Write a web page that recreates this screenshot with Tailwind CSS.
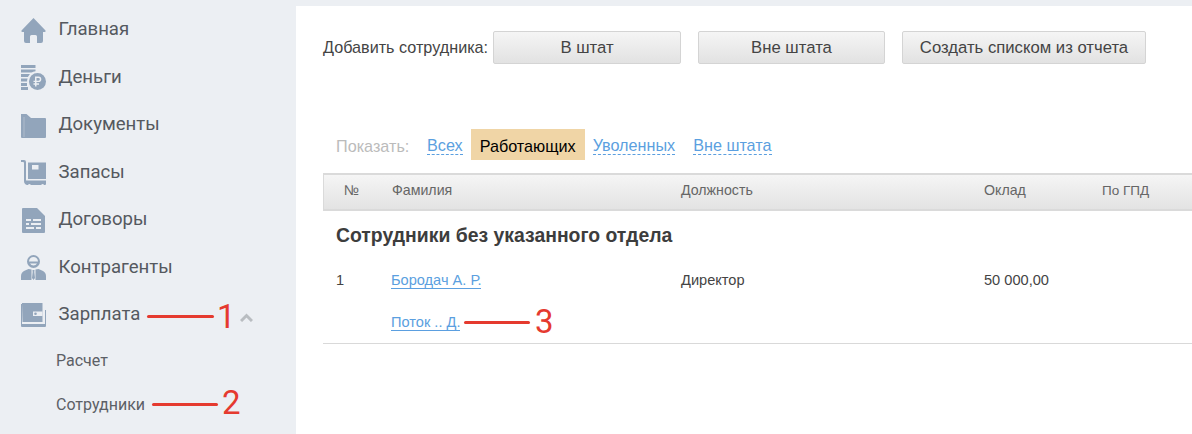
<!DOCTYPE html>
<html lang="ru">
<head>
    <meta charset="UTF-8">
    <title>Сотрудники</title>
    <script src="https://cdn.jsdelivr.net/npm/@tailwindcss/browser@4"></script>
</head>
<body class="relative flex h-[434px] w-[1192px] overflow-hidden bg-[#eceff3] font-['Liberation_Sans',sans-serif]">
    <!-- Sidebar -->
    <aside class="w-[296px] shrink-0 pl-[21px] pt-[6.5px] font-['Roboto',sans-serif] text-[18.6px] text-[#55595f]">
        <div class="flex h-[47.5px] items-center gap-[12.5px]">
            <svg class="h-[25px] w-[25px]" viewBox="0 0 25 25" fill="#92a5bb"><path d="M12.500 0 L24.500 12.500 Q25 14 23.500 14 H22 V23 Q22 25 20 25 H16 V18.500 Q16 17 14.500 17 H10.500 Q9 17 9 18.500 V25 H5 Q3 25 3 23 V14 H1.500 Q0 14 .5 12.500 Z"/></svg>
            <span>Главная</span>
        </div>
        <div class="flex h-[47.5px] items-center gap-[12.5px]">
            <svg class="h-[25px] w-[25px]" viewBox="0 0 25 25" fill="#92a5bb"><path d="M0 0h14.500v3H0zM0 4.500h14.500v3H0zM0 9h10v3H0zM0 13.500h7v3H0zM0 18h6v3H0zM0 22h7v3H0z"/><circle cx="16" cy="16" r="10" fill="#eceff3"/><circle cx="16.500" cy="16.500" r="8.500"/><path d="M14 11.500h3.500a2.800 2.800 0 0 1 0 5.600H15.500v1.200H18v1.500h-2.500v1.700H14v-1.700h-1.500v-1.500H14v-1.200h-1.500v-1.400H14zM15.500 13v2.700h2a1.350 1.350 0 0 0 0-2.700z" fill="#eceff3"/></svg>
            <span>Деньги</span>
        </div>
        <div class="flex h-[47.5px] items-center gap-[12.5px]">
            <svg class="h-[25px] w-[25px]" viewBox="0 0 25 25" fill="#92a5bb"><path d="M0 1h5.500L10 5h14q1 0 1 1v18q0 1-1 1H1q-1 0-1-1z"/><path d="M2.500 4h1v20h-1z" fill="#aebccc"/></svg>
            <span>Документы</span>
        </div>
        <div class="flex h-[47.5px] items-center gap-[12.5px]">
            <svg class="h-[25px] w-[25px]" viewBox="0 0 25 25" fill="#92a5bb"><path d="M0 0h3q2 0 2 2v18q0 .5.5.5H25V24q0 1-1 1h-1q-1-2-3 0H10q-2-2-3 0H6q-3-1-3-4V3q0-1-1-1H0z"/><path fill-rule="evenodd" d="M7 2.500h18V19H7zM11 5v4.500h6.500V5z"/></svg>
            <span>Запасы</span>
        </div>
        <div class="flex h-[47.5px] items-center gap-[12.5px]">
            <svg class="h-[25px] w-[25px]" viewBox="0 0 25 25" fill="#92a5bb"><path fill-rule="evenodd" d="M2 0h14l8 8v16q0 1-1 1H2q-1 0-1-1V1q0-1 1-1zM5 11v2h5v-2zM12 11v2h8v-2zM5 15v2h3v-2zM10 15v2h10v-2zM5 19v2h8v-2zM15 19v2h5v-2z"/></svg>
            <span>Договоры</span>
        </div>
        <div class="flex h-[47.5px] items-center gap-[12.5px]">
            <svg class="h-[25px] w-[25px]" viewBox="0 0 25 25" fill="#92a5bb"><path fill-rule="evenodd" d="M12.500 0a6.500 6.500 0 1 1 0 13a6.500 6.500 0 0 1 0-13zM12.500 2a4.500 4.500 0 0 0-4.500 4.500h9a4.500 4.500 0 0 0-4.500-4.500zM9 8.500a4 4 0 0 0 7 0z"/><path d="M7.500 14l3 .5V25H0v-4q0-4 4-5.500zM17.500 14l-3 .5V25H25v-4q0-4-4-5.500zM11.500 15h2l-.2 2 .7 6-1.500 2-1.500-2 .7-6z"/></svg>
            <span>Контрагенты</span>
        </div>
        <div class="flex h-[47.5px] items-center gap-[12.5px]">
            <svg class="h-[25px] w-[25px]" viewBox="0 0 25 25" fill="#92a5bb"><path d="M1 0h20.500v19H1.500z"/><path d="M0 1h1v20h23V7h1v16q0 1-1 1H1q-1 0-1-1z"/><path fill="#eceff3" d="M12 8.500h9.500V13H12z"/><circle cx="14.500" cy="10.700" r="1.300"/></svg>
            <span class="w-[181.5px]">Зарплата</span>
            <svg class="-ml-[12.5px] mt-[4px] h-[9px] w-[13px]" viewBox="0 0 13 9" fill="none" stroke="#b9bdc1" stroke-width="3"><path d="M1 8 L6.500 2.500 L12 8"/></svg>
        </div>
        <div class="pl-[35px] text-[16px] text-[#5c6066]">
            <div class="flex h-[44px] items-center">Расчет</div>
            <div class="flex h-[44px] items-center">Сотрудники</div>
        </div>
    </aside>

    <!-- Main -->
    <main class="mt-[6px] flex-1 bg-white pl-[27px] text-[#444]">
        <div class="mt-[25px] flex h-[33px] items-center text-[16.7px]">
            <span class="w-[170px] text-[16.2px]">Добавить сотрудника:</span>
            <button class="h-[33px] w-[188px] rounded-[2px] border border-[#d4d4d4] bg-gradient-to-b from-[#f5f5f5] to-[#e2e2e2] pt-[1px]">В штат</button>
            <button class="ml-[17px] h-[33px] w-[187px] rounded-[2px] border border-[#d4d4d4] bg-gradient-to-b from-[#f5f5f5] to-[#e2e2e2] pt-[1px]">Вне штата</button>
            <button class="ml-[17px] h-[33px] w-[244px] rounded-[2px] border border-[#d4d4d4] bg-gradient-to-b from-[#f5f5f5] to-[#e2e2e2] pt-[1px]">Создать списком из отчета</button>
        </div>

        <div class="mt-[65px] flex h-[31px] items-center text-[16.2px]">
            <span class="ml-[13px] mt-[3px] w-[91px] text-[#bbbbbb]">Показать:</span>
            <a class="mt-[3px] border-b border-dashed border-[#5b9fe0] leading-[17px] text-[#5b9fe0]">Всех</a>
            <span class="ml-[8px] flex h-[31px] items-center bg-[#f0d5a6] px-[9px] pt-[3px] text-black">Работающих</span>
            <a class="ml-[8px] mt-[3px] border-b border-dashed border-[#5b9fe0] leading-[17px] text-[#5b9fe0]">Уволенных</a>
            <a class="ml-[18px] mt-[3px] border-b border-dashed border-[#5b9fe0] leading-[17px] text-[#5b9fe0]">Вне штата</a>
        </div>

        <div class="mt-[13px] grid h-[38px] grid-cols-[68px_289px_303px_118px_1fr] items-center border-y-2 border-l border-y-[#dadada] border-l-[#dadada] bg-gradient-to-b from-[#f5f5f5] to-[#e3e3e3] pb-[2px] text-[14.2px] text-[#666]">
            <span class="pl-[20px]">№</span>
            <span>Фамилия</span>
            <span>Должность</span>
            <span>Оклад</span>
            <span class="text-[13.5px]">По ГПД</span>
        </div>

        <h2 class="ml-[13px] mt-[12px] text-[19.4px] font-bold leading-[24px] text-[#3d3d3d]">Сотрудники без указанного отдела</h2>

        <div class="mt-[13px] grid h-[42px] grid-cols-[68px_290px_303px_1fr] items-center text-[14.6px]">
            <span class="pl-[13px]">1</span>
            <a class="justify-self-start border-b border-[#5b9fe0] leading-[15px] text-[#5b9fe0]">Бородач А. Р.</a>
            <span>Директор</span>
            <span>50 000,00</span>
        </div>
        <div class="grid h-[42px] grid-cols-[68px_1fr] items-center border-b border-[#d9d9d9] text-[14.6px]">
            <span></span>
            <a class="justify-self-start border-b border-[#5b9fe0] leading-[15px] text-[#5b9fe0]">Поток .. Д.</a>
        </div>
    </main>

    <!-- Red annotations drawn over the screenshot -->
    <div class="absolute left-[147px] top-[315px] h-[3px] w-[67px] rounded-full bg-[#e53a2f]"></div>
    <span class="absolute left-[217px] top-[299px] font-['Roboto',sans-serif] text-[33px] leading-[36px] text-[#e53a2f]">1</span>
    <div class="absolute left-[152px] top-[403px] h-[3px] w-[66px] rounded-full bg-[#e53a2f]"></div>
    <span class="absolute left-[222px] top-[385px] font-['Roboto',sans-serif] text-[33px] leading-[36px] text-[#e53a2f]">2</span>
    <div class="absolute left-[464px] top-[321px] h-[3px] w-[66px] rounded-full bg-[#e53a2f]"></div>
    <span class="absolute left-[535px] top-[304px] font-['Roboto',sans-serif] text-[33px] leading-[36px] text-[#e53a2f]">3</span>
</body>
</html>
